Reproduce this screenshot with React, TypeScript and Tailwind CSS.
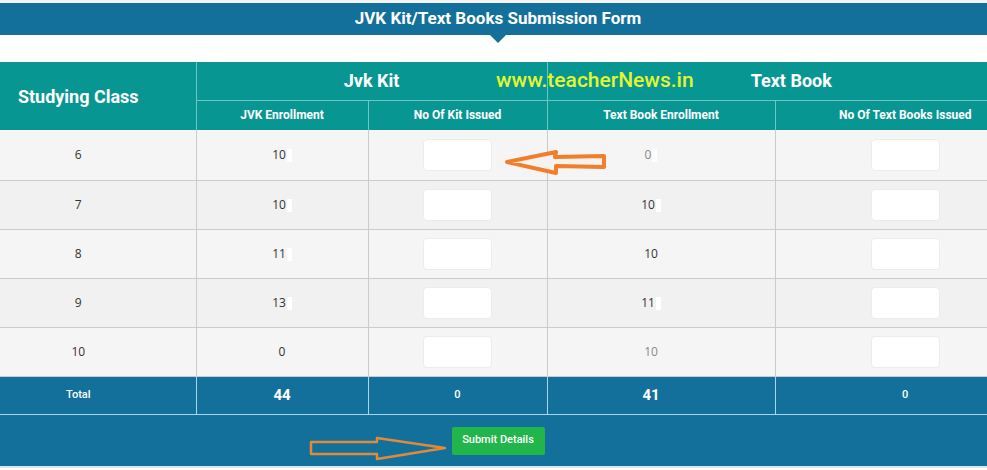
import * as React from 'react';

type Row = {
  cls: string;
  jvk: string;
  jvkMask?: boolean;
  book: string;
  bookMask?: boolean;
  bookGray?: boolean;
};

const ROWS: Row[] = [
  { cls: '6', jvk: '10', jvkMask: true, book: '0', bookMask: true, bookGray: true },
  { cls: '7', jvk: '10', jvkMask: true, book: '10', bookMask: true },
  { cls: '8', jvk: '11', jvkMask: true, book: '10' },
  { cls: '9', jvk: '13', jvkMask: true, book: '11', bookMask: true },
  { cls: '10', jvk: '0', book: '10', bookGray: true },
];

const head = "font-['Roboto','Liberation_Sans',sans-serif] font-bold text-white";
const body = "font-['Open_Sans','Liberation_Sans',sans-serif] text-[12px] text-[#333]";

function Mask() {
  return <span className="ml-[1px] inline-block h-[13px] w-[5px] bg-white align-middle" />;
}

function IssueInput() {
  return (
    <input
      type="text"
      className="h-[32px] w-[69px] rounded-[4px] border border-[#ececec] bg-white outline-none"
    />
  );
}

export default function App() {
  return (
    <div className="relative h-[470px] w-[987px] overflow-hidden bg-white">
      <div className="ml-[-39px] w-[1074px]">
        <div className="h-[3px] bg-[#f4f4f4]" />
        <div className="relative flex h-[32px] items-center justify-center bg-[#13709a]">
          <h1 className={`${head} text-[17px]`}>JVK Kit/Text Books Submission Form</h1>
          <span className="absolute left-[529px] top-[32px] h-0 w-0 border-x-[8px] border-t-[8px] border-x-transparent border-t-[#13709a]" />
        </div>
        <div className="h-[27px] bg-white" />

        <table className="w-[1074px] table-fixed border-collapse">
          <colgroup>
            <col className="w-[235px]" />
            <col className="w-[172px]" />
            <col className="w-[179px]" />
            <col className="w-[228px]" />
            <col className="w-[260px]" />
          </colgroup>
          <thead className="bg-[#089692]">
            <tr className="h-[38px]">
              <th rowSpan={2} className={`${head} border-r border-[#6cc6c3] text-[18px]`}>
                Studying Class
              </th>
              <th colSpan={2} className={`${head} border-b border-r border-[#6cc6c3] text-[18px]`}>
                Jvk Kit
              </th>
              <th colSpan={2} className={`${head} border-b border-[#6cc6c3] text-[18px]`}>
                Text Book
              </th>
            </tr>
            <tr className="h-[30px]">
              <th className={`${head} border-r border-[#6cc6c3] text-[12px]`}>JVK Enrollment</th>
              <th className={`${head} border-r border-[#6cc6c3] text-[12px]`}>No Of Kit Issued</th>
              <th className={`${head} border-r border-[#6cc6c3] text-[12px]`}>Text Book Enrollment</th>
              <th className={`${head} text-[12px]`}>No Of Text Books Issued</th>
            </tr>
          </thead>
          <tbody>
            {ROWS.map((r, i) => (
              <tr
                key={r.cls}
                className={`${i === 0 ? 'h-[50px]' : 'h-[49px]'} ${i % 2 === 1 ? 'bg-[#f1f1f1]' : 'bg-[#f5f5f5]'}`}
              >
                <td className={`${body} border-b border-r border-[#cbcbcb] text-center`}>{r.cls}</td>
                <td className={`${body} border-b border-r border-[#cbcbcb] text-center`}>
                  {r.jvk}
                  {r.jvkMask && <Mask />}
                </td>
                <td className="border-b border-r border-[#cbcbcb] text-center">
                  <IssueInput />
                </td>
                <td
                  className={`${body} border-b border-r border-[#cbcbcb] pr-[20px] text-center ${r.bookGray ? 'text-[#888]' : ''}`}
                >
                  {r.book}
                  {r.bookMask && <Mask />}
                </td>
                <td className="border-b border-[#cbcbcb] text-center">
                  <IssueInput />
                </td>
              </tr>
            ))}
            <tr className="h-[38px] bg-[#13709a]">
              <td className={`${head} border-r border-t border-[#a9d6ea] text-center text-[11px] font-medium`}>
                Total
              </td>
              <td className={`${head} border-r border-t border-[#a9d6ea] text-center text-[15px]`}>44</td>
              <td className={`${head} border-r border-t border-[#a9d6ea] text-center text-[11px] font-medium`}>
                0
              </td>
              <td className={`${head} border-r border-t border-[#a9d6ea] pr-[20px] text-center text-[15px]`}>
                41
              </td>
              <td className={`${head} border-t border-[#a9d6ea] text-center text-[11px] font-medium`}>0</td>
            </tr>
          </tbody>
        </table>

        <div className="flex h-[54px] items-center justify-center border-t border-b-2 border-[#a9d6ea] border-b-[#d3e9f2] bg-[#13709a]">
          <button
            type="button"
            className="h-[28px] w-[93px] rounded-[2px] bg-[#21b54b] font-['Roboto','Liberation_Sans',sans-serif] text-[11px] font-medium text-white"
          >
            Submit Details
          </button>
        </div>
      </div>

      {/* watermark */}
      <span className="absolute left-[496px] top-[65px] font-['Roboto','Liberation_Sans',sans-serif] text-[21px] font-medium text-[#e2f52f]">
        www.teacherNews.in
      </span>

      {/* hand-drawn arrows */}
      <svg className="absolute left-[500px] top-[145px]" width="112" height="34" viewBox="0 0 112 34">
        <polygon
          points="7,17 56,7 55,12 104,11 104,22 56,21 56,28"
          fill="#f6f3ef"
          stroke="#f27d2a"
          strokeWidth="4"
          strokeLinejoin="round"
        />
      </svg>
      <svg className="absolute left-[306px] top-[432px]" width="145" height="32" viewBox="0 0 145 32">
        <polygon
          points="5,10 71,10 71,6 139,16 71,27 71,22 5,22"
          fill="none"
          stroke="#e3893c"
          strokeWidth="2.5"
          strokeLinejoin="round"
        />
      </svg>
    </div>
  );
}
